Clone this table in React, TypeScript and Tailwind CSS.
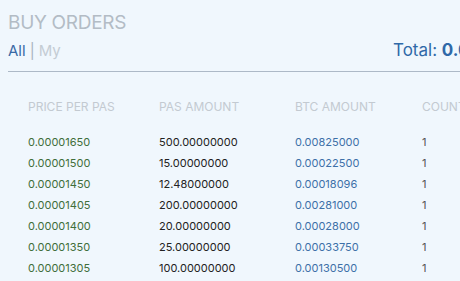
const rows = [
  ["0.00001650", "500.00000000", "0.00825000", "1"],
  ["0.00001500", "15.00000000", "0.00022500", "1"],
  ["0.00001450", "12.48000000", "0.00018096", "1"],
  ["0.00001405", "200.00000000", "0.00281000", "1"],
  ["0.00001400", "20.00000000", "0.00028000", "1"],
  ["0.00001350", "25.00000000", "0.00033750", "1"],
  ["0.00001305", "100.00000000", "0.00130500", "1"],
];

export default function App() {
  return (
    <div
      className="w-[460px] h-[281px] overflow-hidden bg-[#f0f7fd]"
      style={{ fontFamily: "Inter, 'Noto Sans', sans-serif" }}
    >
      <div className="w-[640px] pl-2 pt-[11px]">
        <h2 className="text-[19px] leading-[24px] text-[#b3bcc5] tracking-[-0.3px]">
          BUY ORDERS
        </h2>

        <div className="flex items-baseline h-[37px] pt-[4px] border-b border-[#adb9c7]">
          <div className="w-[385px] text-[15px] leading-[22px]">
            <span className="text-[#3a6aa6]">All</span>
            <span className="text-[#a9b4bf] mx-[4px]">|</span>
            <span className="text-[#c4ccd4]">My</span>
          </div>
          <div className="text-[17px] leading-[22px] text-[#2f69a8]">
            Total: <span className="font-bold">0.00000000</span>
          </div>
        </div>

        <table className="ml-5 mt-[24px] border-collapse text-left">
          <thead>
            <tr className="text-[12px] text-[#c3cad1] h-[22px]">
              <th className="w-[131px] font-normal p-0">PRICE PER PAS</th>
              <th className="w-[136px] font-normal p-0">PAS AMOUNT</th>
              <th className="w-[127px] font-normal p-0">BTC AMOUNT</th>
              <th className="font-normal p-0">COUNT</th>
            </tr>
          </thead>
          <tbody className="text-[11px]">
            <tr className="h-[14px]" />
            {rows.map((r) => (
              <tr key={r[0]} className="h-[21px]">
                <td className="p-0 text-[#3f6e3a]">{r[0]}</td>
                <td className="p-0 text-[#222222]">{r[1]}</td>
                <td className="p-0 text-[#3d70a8]">{r[2]}</td>
                <td className="p-0 text-[#555555]">{r[3]}</td>
              </tr>
            ))}
          </tbody>
        </table>
      </div>
    </div>
  );
}
